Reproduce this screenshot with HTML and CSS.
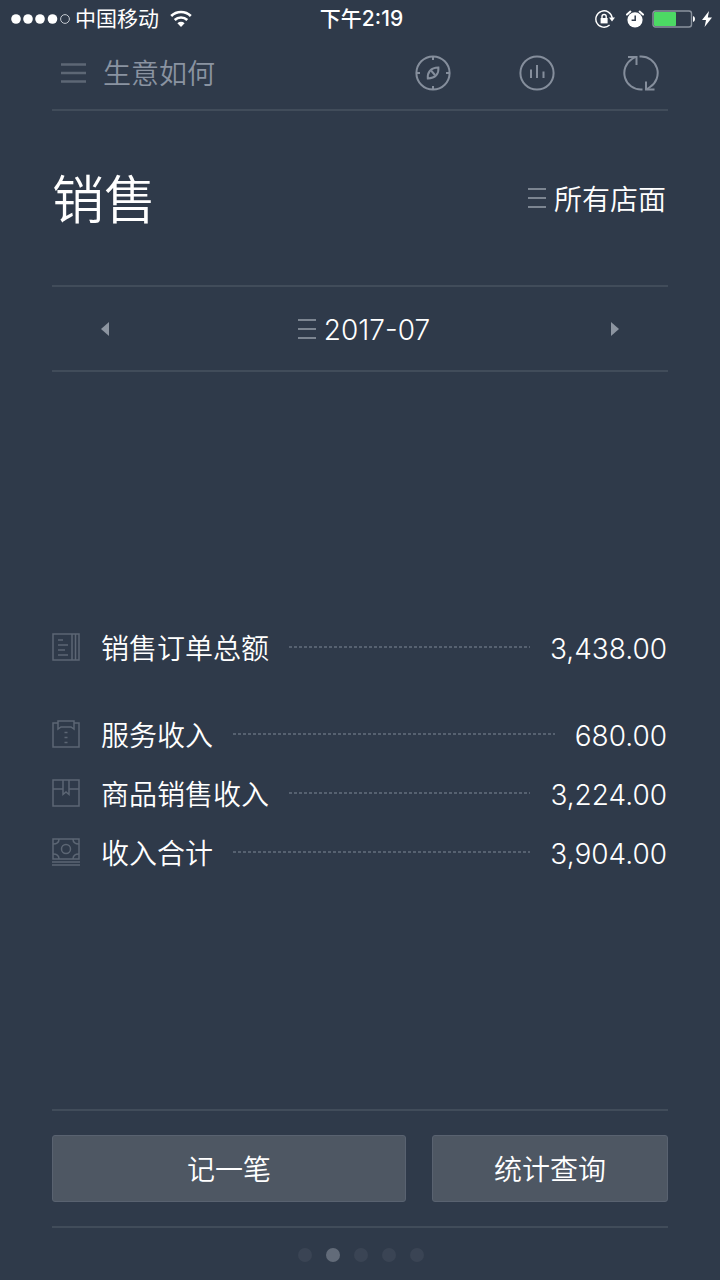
FILE: index.html
```html
<!DOCTYPE html>
<html lang="zh-CN">
<head>
    <meta charset="UTF-8">
    <meta name="viewport" content="width=device-width, initial-scale=1.0">
    <title>生意如何</title>
    <link rel="stylesheet" href="styles.css">
</head>
<body>

<!-- Status bar -->
<div class="status-bar">
    <div class="status-left">
        <svg class="signal" width="60" height="12" viewBox="0 0 60 12" fill="#fff">
            <circle cx="5" cy="6" r="4.8"/>
            <circle cx="17" cy="6" r="4.8"/>
            <circle cx="29" cy="6" r="4.8"/>
            <circle cx="41.500" cy="6" r="4.8"/>
            <circle cx="54" cy="6" r="4.4" fill="none" stroke="#c5cad1"/>
        </svg>
        <span>中国移动</span>
        <svg class="wifi" width="22" height="18" viewBox="0 0 22 18" fill="none" stroke="#fff" stroke-width="2.6">
            <path d="M1.2 6a14 14 0 0 1 19.6 0"/>
            <path d="M4.7 10a9 9 0 0 1 12.6 0"/>
            <path d="M11 17l-3.6-3.7a5.2 5.2 0 0 1 7.2 0z" fill="#fff" stroke="none"/>
        </svg>
    </div>
    <div class="status-time">下午2:19</div>
    <div class="status-right">
        <svg width="20" height="20" viewBox="0 0 20 20" fill="none" stroke="#fff" stroke-width="1.4">
            <path d="M14.6 16.1A8.2 8.2 0 1 1 17.2 9"/>
            <path d="M14 8.6h6l-3 4z" fill="#fff" stroke="none"/>
            <rect x="5.6" y="9" width="7" height="5.4" fill="#fff" stroke="none"/>
            <path d="M7 9.4V7.6a2.1 2.1 0 0 1 4.2 0v1.8"/>
        </svg>
        <svg class="alarm" width="18" height="18" viewBox="0 0 18 18">
            <circle cx="9" cy="9.8" r="7.6" fill="#fff"/>
            <path d="M9.2 5.4v4.8H5.6" fill="none" stroke="#2f3a4a" stroke-width="1.5"/>
            <path d="M1 4.6L4.4 1.6M17 4.6L13.6 1.6" stroke="#fff" stroke-width="2" stroke-linecap="round"/>
        </svg>
        <svg width="44" height="18" viewBox="0 0 44 18">
            <rect x="1" y="1" width="38.5" height="16" rx="2.5" fill="none" stroke="#8b939e" stroke-width="1.4"/>
            <rect x="2" y="2" width="22" height="14" rx="1" fill="#4cd964"/>
            <path d="M41 6q2 .6 2 3t-2 3z" fill="#fff"/>
        </svg>
        <svg width="10" height="18" viewBox="0 0 10 18">
            <path d="M7 1L0 10h4L2.6 17L10 7.6H5.8z" fill="#fff"/>
        </svg>
    </div>
</div>

<!-- Top bar -->
<header class="top-bar">
    <button class="menu-button" type="button">
        <svg width="26" height="20" viewBox="0 0 26 20" stroke="#5d6775" stroke-width="2.4">
            <path d="M1 1.500h25M1 10h25M1 18.500h25"/>
        </svg>
        <span class="text">生意如何</span>
    </button>
    <div class="tools">
        <button type="button" aria-label="指南">
            <svg width="36" height="36" viewBox="0 0 36 36" fill="none" stroke="#858e9c" stroke-width="2">
                <circle cx="18" cy="18" r="16.6"/>
                <path d="M18 1v4M18 31v4M1 18h4M31 18h4"/>
                <path d="M23.4 12.600q.4 4.600-2 7.400-3 3.400-8.600 3.400-.4-4.600 2-7.400 3-3.400 8.600-3.400z"/>
                <path d="M16 15.500l4 4.500"/>
            </svg>
        </button>
        <button type="button" aria-label="统计">
            <svg width="36" height="36" viewBox="0 0 36 36" fill="none" stroke="#858e9c" stroke-width="2">
                <circle cx="18" cy="18" r="16.6"/>
                <path d="M12 14.500v8.500M18 10v13M24.500 16.500v6.500"/>
            </svg>
        </button>
        <button type="button" aria-label="刷新">
            <svg width="36" height="36" viewBox="0 0 36 36" fill="none" stroke="#858e9c" stroke-width="2">
                <path d="M19.500 34.600H18A16.600 16.600 0 0 1 9 4L12.500 2"/>
                <path d="M5 2h8.500v8"/>
                <path d="M16.500 1.400H18A16.600 16.600 0 0 1 27 32L23.500 34.500"/>
                <path d="M31.500 34.500H23v-8"/>
            </svg>
        </button>
    </div>
</header>

<!-- Title and store picker -->
<section class="title-section">
    <h1>销售</h1>
    <button class="picker" type="button">
        <svg width="18" height="20" viewBox="0 0 18 20" stroke="#979ea9" stroke-width="1.6">
            <path d="M0 1h18M0 10h18M0 19h18"/>
        </svg>
        <span class="text">所有店面</span>
    </button>
</section>

<!-- Month switcher -->
<nav class="month-bar">
    <button class="arrow" type="button" aria-label="上个月">
        <svg width="8" height="14" viewBox="0 0 8 14" fill="#8d95a1"><path d="M8 0v14L0 7z"/></svg>
    </button>
    <button class="picker month" type="button">
        <svg width="18" height="20" viewBox="0 0 18 20" stroke="#979ea9" stroke-width="1.6">
            <path d="M0 1h18M0 10h18M0 19h18"/>
        </svg>
        <span class="text">2017-07</span>
    </button>
    <button class="arrow" type="button" aria-label="下个月">
        <svg width="8" height="14" viewBox="0 0 8 14" fill="#8d95a1"><path d="M0 0v14l8-7z"/></svg>
    </button>
</nav>

<!-- Summary -->
<main class="summary">
    <ul class="rows">
        <li class="row total">
            <svg class="row-icon" viewBox="0 0 28 28">
                <path d="M1 1h26v26H1zM20 1v26M23.500 1v26"/>
                <path d="M6 7h5M6 12h10M6 17h7M6 22h10"/>
            </svg>
            <span class="text">销售订单总额</span>
            <span class="dots"></span>
            <span class="text">3,438.00</span>
        </li>
        <li class="row">
            <svg class="row-icon" viewBox="0 0 28 28">
                <path d="M6 3H1v24h26V3h-5"/>
                <path d="M6 1h16v8l-3-2H9L6 9z"/>
                <path d="M12.500 12.500h3M12.500 17.500h3M12.500 22.500h3"/>
            </svg>
            <span class="text">服务收入</span>
            <span class="dots"></span>
            <span class="text">680.00</span>
        </li>
        <li class="row">
            <svg class="row-icon" viewBox="0 0 28 28">
                <path d="M1 1h26v26H1zM1 10h10M17 10h10"/>
                <path d="M11 1v14.500l3-2.500 3 2.500V1"/>
            </svg>
            <span class="text">商品销售收入</span>
            <span class="dots"></span>
            <span class="text">3,224.00</span>
        </li>
        <li class="row">
            <svg class="row-icon" viewBox="0 0 28 28">
                <path d="M1 1h26v20H1zM0 24h28M0 27h28"/>
                <circle cx="14" cy="11" r="4.5"/>
                <path d="M7 1q0 5-6 5M21 1q0 5 6 5M7 21q0-5-6-5M21 21q0-5 6-5"/>
            </svg>
            <span class="text">收入合计</span>
            <span class="dots"></span>
            <span class="text">3,904.00</span>
        </li>
    </ul>
</main>

<!-- Actions -->
<footer>
    <div class="actions">
        <button class="action" type="button">记一笔</button>
        <button class="action" type="button">统计查询</button>
    </div>
    <div class="pager">
        <span></span>
        <span class="active"></span>
        <span></span>
        <span></span>
        <span></span>
    </div>
</footer>

</body>
</html>
```

FILE: styles.css
```css
* {
    box-sizing: border-box;
}
body {
    font-family: Inter, "Noto Sans CJK SC", sans-serif;
    font-weight: 350;
    font-size: 28px;
    line-height: 40px;
    background: #2f3a4a;
    color: #fff;
    margin: 0;
    min-height: 100vh;
    display: flex;
    flex-direction: column;
}
svg {
    display: block;
    flex: none;
}
button {
    font: inherit;
    color: inherit;
    background: none;
    border: none;
    margin: 0;
    padding: 0;
    cursor: pointer;
}
.text {
    padding-top: 3px;
}

/* Status bar */
.status-bar {
    height: 36px;
    padding: 0 8px 0 11px;
    display: grid;
    grid-template-columns: 1fr auto 1fr;
    align-items: center;
    font-size: 21px;
    font-weight: 400;
    line-height: 36px;
}
.status-left, .status-right {
    display: flex;
    align-items: center;
}
.signal {
    margin-right: 4px;
}
.wifi {
    margin-left: 11px;
}
.status-time {
    font-weight: 500;
    padding-top: 1px;
}
.status-right {
    justify-content: flex-end;
    gap: 6px;
}
.alarm {
    margin: 0 2px 0 5px;
}

/* Top bar */
.top-bar {
    height: 75px;
    margin: 0 52px;
    padding: 0 9px 0 8px;
    display: flex;
    align-items: center;
    justify-content: space-between;
    border-bottom: 2px solid #414c5a;
}
.menu-button {
    display: flex;
    align-items: center;
    gap: 17px;
    color: #8a93a1;
}
.tools {
    display: flex;
    gap: 68px;
}

/* Title */
.title-section {
    margin: 0 52px;
    padding-right: 2px;
    height: 176px;
    display: flex;
    align-items: center;
    justify-content: space-between;
    border-bottom: 2px solid #414c5a;
}
h1 {
    font-size: 52px;
    font-weight: 350;
    line-height: 72px;
    margin: 0;
    padding-top: 6px;
}
.picker {
    display: flex;
    align-items: center;
    gap: 8px;
}

/* Month switcher */
.month-bar {
    margin: 0 52px;
    height: 85px;
    display: flex;
    align-items: stretch;
    justify-content: space-between;
    border-bottom: 2px solid #414c5a;
}
.month {
    padding-left: 8px;
}
.arrow {
    width: 106px;
    display: flex;
    align-items: center;
    justify-content: center;
}

/* Summary */
.summary {
    flex: 1;
    margin: 0 52px;
    padding-top: 18px;
    display: flex;
    flex-direction: column;
    justify-content: center;
}
.rows {
    list-style: none;
    margin: 0;
    padding: 0;
}
.row {
    height: 59px;
    padding-right: 1px;
    display: flex;
    align-items: center;
    gap: 20px;
}
.total {
    margin-bottom: 28px;
}
.row-icon {
    width: 28px;
    height: 28px;
    margin-right: 1px;
    fill: none;
    stroke: #5c6674;
    stroke-width: 1.5;
}
.dots {
    flex: 1;
    height: 2px;
    background: repeating-linear-gradient(to right, #566170 0 3px, transparent 3px 5px);
}

/* Actions */
footer {
    margin: 0 52px;
    border-top: 2px solid #414c5a;
}
.actions {
    display: grid;
    grid-template-columns: 3fr 2fr;
    gap: 26px;
    padding: 24px 0;
    border-bottom: 2px solid #414c5a;
}
.action {
    height: 67px;
    padding-top: 2px;
    background: #4e5763;
    border: 1px solid #596270;
    border-radius: 3px;
}
.pager {
    height: 52px;
    padding: 2px 0 0 2px;
    display: flex;
    align-items: center;
    justify-content: center;
    gap: 14px;
}
.pager span {
    width: 14px;
    height: 14px;
    border-radius: 50%;
    background: #3a4454;
}
.pager .active {
    background: #626b79;
}
```
